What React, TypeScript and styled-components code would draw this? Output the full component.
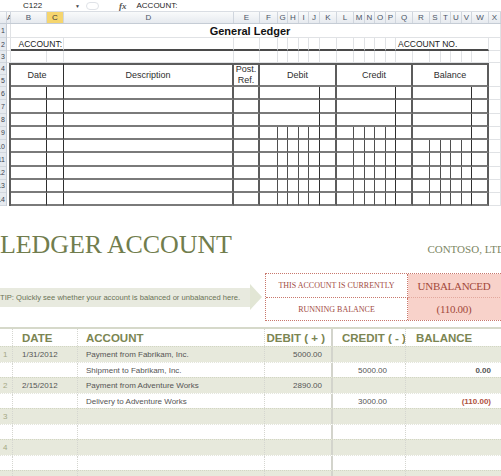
import React from 'react';
import styled, { createGlobalStyle, css } from 'styled-components';

const GlobalStyle = createGlobalStyle`
  html, body { margin: 0; padding: 0; background: #ffffff; }
  body { font-family: "Liberation Sans", Arial, sans-serif; }
  #root { width: 501px; height: 476px; overflow: hidden; }
`;

const LETTERS = 'ABCDEFGHIJKLMNOPQRSTUVWX'.split('');
const WIDTHS = [4, 36, 17, 170, 26, 18, 10, 11, 10, 11, 17, 17, 11, 10, 11, 10, 17, 17, 11, 10, 11, 10, 17, 12];
const COLS = WIDTHS.map((w) => `${w}px`).join(' ');
const ROW_H = [14, 13, 12, 12, 12, 13.25, 13.25, 13.25, 13.25, 13.25, 13.25, 13.25, 13.25, 13.25];

type Line = 'none' | 'faint' | 'thin' | 'fine' | 'thick' | 'row' | 'under';
const LINE: Record<Line, string> = {
  none: 'none',
  faint: '1px solid #e0e2e5',
  thin: '1px solid #2f2f2f',
  fine: '1px solid #4f4f4f',
  thick: '2px solid #5c5c5c',
  row: '2px solid #7a7a7a',
  under: '2px solid #4a4a4a',
};

/* ---------- Excel part ---------- */

const Excel = styled.section`
  display: flex;
  flex-direction: column;
  width: 501px;
`;

const FormulaBar = styled.div`
  display: flex;
  align-items: center;
  height: 12px;
  box-sizing: border-box;
  border-bottom: 1px solid #d9dde3;
  font-size: 8px;
  color: #1e1e1e;
`;

const NameBox = styled.div`
  width: 75px;
  box-sizing: border-box;
  padding-left: 23px;
`;

const DropArrow = styled.span`
  width: 7px;
  font-size: 5px;
  color: #444;
`;

const Grip = styled.span`
  margin-left: 4px;
  width: 13px;
  height: 8px;
  border: 1px solid #dfe2e7;
  border-radius: 5px;
  box-sizing: border-box;
`;

const Fx = styled.span`
  margin-left: 20px;
  font-family: "Liberation Serif", serif;
  font-style: italic;
  font-weight: bold;
  font-size: 9px;
  color: #555;
`;

const FormulaText = styled.span`
  margin-left: 10px;
`;

const ColumnStrip = styled.div`
  display: grid;
  grid-template-columns: 7px ${COLS};
  height: 12px;
  box-sizing: border-box;
  background: linear-gradient(#f9fafb, #e6eaef);
  border-bottom: 1px solid #c5ccd5;
`;

const ColHead = styled.div<{ $active?: boolean }>`
  border-right: 1px solid #d0d6de;
  font-size: 8px;
  line-height: 11px;
  text-align: center;
  color: #4a5465;
  overflow: hidden;
  ${(p) =>
    p.$active &&
    css`
      background: #f5d56e;
      color: #3a3a3a;
    `}
`;

const SheetBody = styled.div`
  display: flex;
`;

const RowHeads = styled.div`
  width: 7px;
  flex: none;
  display: flex;
  flex-direction: column;
  background: #e6eaef;
  border-right: 1px solid #c5ccd5;
  box-sizing: border-box;
`;

const RowHead = styled.div<{ $h: number }>`
  height: ${(p) => p.$h}px;
  display: flex;
  align-items: center;
  justify-content: flex-end;
  overflow: hidden;
  font-size: 7px;
  color: #3d4450;
  border-bottom: 1px solid #d2d8df;
  box-sizing: border-box;
  padding-right: 1px;
`;

const SheetGrid = styled.div`
  display: grid;
  grid-template-columns: ${COLS};
  grid-template-rows: ${ROW_H.map((h) => `${h}px`).join(' ')};
`;

type CellProps = {
  $c: number;
  $span?: number;
  $r: number;
  $rspan?: number;
  $right?: Line;
  $bottom?: Line;
  $top?: Line;
  $align?: string;
};

const Cell = styled.div<CellProps>`
  grid-column: ${(p) => p.$c} / span ${(p) => p.$span ?? 1};
  grid-row: ${(p) => p.$r} / span ${(p) => p.$rspan ?? 1};
  box-sizing: border-box;
  border-right: ${(p) => LINE[p.$right ?? 'none']};
  border-bottom: ${(p) => LINE[p.$bottom ?? 'none']};
  border-top: ${(p) => LINE[p.$top ?? 'none']};
  display: flex;
  align-items: center;
  justify-content: ${(p) => p.$align ?? 'flex-start'};
  overflow: hidden;
  white-space: nowrap;
  min-width: 0;
`;

const SheetTitle = styled.span`
  font-size: 11px;
  font-weight: bold;
  color: #111;
`;

const SheetLabel = styled.span<{ $pad?: string }>`
  font-size: 8.5px;
  color: #222;
  padding: ${(p) => p.$pad ?? '0'};
`;

const HeadLabel = styled.span`
  font-size: 9px;
  color: #2e2e2e;
  text-align: center;
  line-height: 11px;
`;

function rightLine(ci: number, i: number): Line {
  const l = LETTERS[ci - 1];
  if ('BCJPV'.includes(l)) return 'thin';
  if ('DEKQW'.includes(l)) return 'thick';
  if ('FGHILMNO'.includes(l)) return i >= 3 ? 'fine' : 'none';
  if ('RSTU'.includes(l)) return i >= 4 ? 'fine' : 'none';
  return 'none';
}

function sheetCells() {
  const out: React.ReactNode[] = [];
  let k = 0;
  const add = (p: CellProps, child?: React.ReactNode) => out.push(<Cell key={k++} {...p}>{child}</Cell>);

  // Row 1
  add({ $c: 1, $r: 1, $right: 'faint', $bottom: 'faint' });
  add({ $c: 2, $span: 22, $r: 1, $bottom: 'faint', $align: 'center' }, <SheetTitle>General Ledger</SheetTitle>);
  add({ $c: 24, $r: 1, $right: 'faint', $bottom: 'faint' });

  // Row 2
  add({ $c: 1, $r: 2, $right: 'faint', $bottom: 'faint' });
  add({ $c: 2, $span: 2, $r: 2, $right: 'faint', $bottom: 'under', $align: 'flex-end' }, <SheetLabel $pad="0 1px 0 0">ACCOUNT:</SheetLabel>);
  for (let c = 4; c <= 16; c++) add({ $c: c, $r: 2, $right: 'faint', $bottom: 'under' });
  add({ $c: 17, $span: 7, $r: 2, $right: 'faint', $bottom: 'under' }, <SheetLabel $pad="0 0 0 2px">ACCOUNT NO.</SheetLabel>);
  add({ $c: 24, $r: 2, $right: 'faint', $bottom: 'faint' });

  // Row 3
  for (let c = 1; c <= 24; c++) add({ $c: c, $r: 3, $right: 'faint', $bottom: 'faint' });

  // Rows 4-5 : table header
  add({ $c: 1, $r: 4, $rspan: 2, $right: 'thick' });
  add({ $c: 2, $span: 2, $r: 4, $rspan: 2, $top: 'thick', $right: 'thin', $bottom: 'row', $align: 'center' }, <HeadLabel>Date</HeadLabel>);
  add({ $c: 4, $r: 4, $rspan: 2, $top: 'thick', $right: 'thick', $bottom: 'row', $align: 'center' }, <HeadLabel>Description</HeadLabel>);
  add(
    { $c: 5, $r: 4, $rspan: 2, $top: 'thick', $right: 'thick', $bottom: 'row', $align: 'center' },
    <HeadLabel>
      Post.
      <br />
      Ref.
    </HeadLabel>,
  );
  add({ $c: 6, $span: 6, $r: 4, $rspan: 2, $top: 'thick', $right: 'thick', $bottom: 'row', $align: 'center' }, <HeadLabel>Debit</HeadLabel>);
  add({ $c: 12, $span: 6, $r: 4, $rspan: 2, $top: 'thick', $right: 'thick', $bottom: 'row', $align: 'center' }, <HeadLabel>Credit</HeadLabel>);
  add({ $c: 18, $span: 6, $r: 4, $rspan: 2, $top: 'thick', $right: 'thick', $bottom: 'row', $align: 'center' }, <HeadLabel>Balance</HeadLabel>);
  add({ $c: 24, $r: 4, $rspan: 2, $right: 'faint', $bottom: 'faint' });

  // Rows 6-14 : ledger lines
  for (let i = 0; i < 9; i++) {
    const r = 6 + i;
    add({ $c: 1, $r: r, $right: 'thick' });
    for (let c = 2; c <= 23; c++) add({ $c: c, $r: r, $right: rightLine(c, i), $bottom: 'row' });
    add({ $c: 24, $r: r, $right: 'faint', $bottom: 'faint' });
  }
  return out;
}

/* ---------- Ledger template part ---------- */

const Template = styled.section`
  padding-top: 26px;
  width: 501px;
`;

const TitleRow = styled.div`
  display: flex;
  align-items: baseline;
  height: 26px;
`;

const BigTitle = styled.h1`
  margin: 0;
  font-family: "Liberation Serif", serif;
  font-weight: normal;
  font-size: 26px;
  line-height: 26px;
  color: #717d4d;
  letter-spacing: -0.1px;
  white-space: nowrap;
`;

const Company = styled.div`
  margin-left: auto;
  margin-right: -4px;
  font-family: "Liberation Serif", serif;
  font-size: 11px;
  color: #7d8663;
  white-space: nowrap;
`;

const StatusRow = styled.div`
  margin-top: 15px;
  display: flex;
  align-items: center;
`;

const Tip = styled.div`
  position: relative;
  flex: none;
  width: 250px;
  height: 19px;
  background: #e8eadf;
  font-size: 7.6px;
  line-height: 19px;
  color: #6b7356;
  white-space: nowrap;

  &::after {
    content: '';
    position: absolute;
    right: -12px;
    top: -4px;
    border-left: 12px solid #e2e6d5;
    border-top: 13.5px solid transparent;
    border-bottom: 13.5px solid transparent;
  }
`;

const StatusBox = styled.div`
  margin-left: 15px;
  flex: none;
  width: 240px;
  border: 1px dotted #c8786d;
  display: grid;
  grid-template-columns: 142px 1fr;
  grid-template-rows: 24px 22px;
`;

const StatusLabel = styled.div<{ $first?: boolean }>`
  display: flex;
  align-items: center;
  justify-content: center;
  font-family: "Liberation Serif", serif;
  font-size: 8px;
  text-transform: uppercase;
  color: #a24b3f;
  border-right: 1px dotted #c8786d;
  border-bottom: ${(p) => (p.$first ? '1px dotted #c8786d' : 'none')};
`;

const StatusValue = styled.div<{ $first?: boolean }>`
  display: flex;
  align-items: center;
  justify-content: center;
  background: #f8d2ca;
  font-family: "Liberation Serif", serif;
  font-size: 11px;
  letter-spacing: -0.3px;
  color: #a3493b;
  padding-right: 6px;
  border-bottom: ${(p) => (p.$first ? '1px dotted #e3a89d' : 'none')};
`;

const LedgerTable = styled.div`
  margin-top: 6px;
  display: flex;
  flex-direction: column;
`;

const TABLE_COLS = '13px 65px 187px 68px 73px 95px';

const HeaderRow = styled.div`
  display: grid;
  grid-template-columns: ${TABLE_COLS};
  height: 19px;
  box-sizing: border-box;
  border-top: 2px solid #d6d9ca;
`;

const DataRow = styled.div<{ $shade: boolean }>`
  display: grid;
  grid-template-columns: ${TABLE_COLS};
  height: 15.5px;
  box-sizing: border-box;
  background: ${(p) => (p.$shade ? '#e7e9dc' : '#ffffff')};
  border-top: 1px dotted ${(p) => (p.$shade ? '#d2d6c3' : '#e4e6dc')};
`;

type Divider = 'dot' | 'solid' | 'none';
const DIV: Record<Divider, string> = {
  dot: '1px dotted #d5d6d0',
  solid: '2px solid #d3d4cc',
  none: 'none',
};

const HeadCell = styled.div<{ $div: Divider; $align?: string; $pad: string }>`
  display: flex;
  align-items: center;
  justify-content: ${(p) => p.$align ?? 'flex-start'};
  padding: ${(p) => p.$pad};
  border-right: ${(p) => DIV[p.$div]};
  font-size: 11.5px;
  font-weight: bold;
  color: #7b8552;
  white-space: nowrap;
  overflow: hidden;
`;

const DataCell = styled.div<{ $div: Divider; $align?: string; $pad: string; $tone?: 'num' | 'bold' | 'neg' }>`
  display: flex;
  align-items: center;
  justify-content: ${(p) => p.$align ?? 'flex-start'};
  padding: ${(p) => p.$pad};
  border-right: ${(p) => DIV[p.$div]};
  font-size: 8px;
  color: #555;
  white-space: nowrap;
  overflow: hidden;
  ${(p) => p.$tone === 'num' && css`color: #a4a884;`}
  ${(p) => p.$tone === 'bold' && css`font-weight: bold; color: #555;`}
  ${(p) => p.$tone === 'neg' && css`font-weight: bold; color: #b0523e;`}
`;

type Entry = {
  n?: string;
  date?: string;
  account?: string;
  debit?: string;
  credit?: string;
  balance?: string;
  negative?: boolean;
};

const ENTRIES: Entry[] = [
  { n: '1', date: '1/31/2012', account: 'Payment from Fabrikam, Inc.', debit: '5000.00' },
  { account: 'Shipment to Fabrikam, Inc.', credit: '5000.00', balance: '0.00' },
  { n: '2', date: '2/15/2012', account: 'Payment from Adventure Works', debit: '2890.00' },
  { account: 'Delivery to Adventure Works', credit: '3000.00', balance: '(110.00)', negative: true },
  { n: '3' },
  {},
  { n: '4' },
  {},
  { n: '5' },
];

export default function App() {
  return (
    <>
      <GlobalStyle />
      <Excel>
        <FormulaBar>
          <NameBox>C122</NameBox>
          <DropArrow>▼</DropArrow>
          <Grip />
          <Fx>fx</Fx>
          <FormulaText>ACCOUNT:</FormulaText>
        </FormulaBar>
        <ColumnStrip>
          <ColHead />
          {LETTERS.map((l) => (
            <ColHead key={l} $active={l === 'C'}>
              {l}
            </ColHead>
          ))}
        </ColumnStrip>
        <SheetBody>
          <RowHeads>
            {ROW_H.map((h, i) => (
              <RowHead key={i} $h={h}>
                {i + 1}
              </RowHead>
            ))}
          </RowHeads>
          <SheetGrid>{sheetCells()}</SheetGrid>
        </SheetBody>
      </Excel>

      <Template>
        <TitleRow>
          <BigTitle>LEDGER ACCOUNT</BigTitle>
          <Company>CONTOSO, LTD</Company>
        </TitleRow>
        <StatusRow>
          <Tip>TIP: Quickly see whether your account is balanced or unbalanced here.</Tip>
          <StatusBox>
            <StatusLabel $first>This account is currently</StatusLabel>
            <StatusValue $first>UNBALANCED</StatusValue>
            <StatusLabel>Running balance</StatusLabel>
            <StatusValue>(110.00)</StatusValue>
          </StatusBox>
        </StatusRow>
        <LedgerTable>
          <HeaderRow>
            <HeadCell $div="dot" $pad="0" />
            <HeadCell $div="dot" $pad="0 0 0 9px">DATE</HeadCell>
            <HeadCell $div="dot" $pad="0 0 0 8px">ACCOUNT</HeadCell>
            <HeadCell $div="solid" $pad="0 6px 0 0" $align="flex-end">
              DEBIT ( + )
            </HeadCell>
            <HeadCell $div="dot" $pad="0 0 0 9px">CREDIT ( - )</HeadCell>
            <HeadCell $div="none" $pad="0 0 0 10px">BALANCE</HeadCell>
          </HeaderRow>
          {ENTRIES.map((e, i) => (
            <DataRow key={i} $shade={i % 2 === 0}>
              <DataCell $div="dot" $pad="0 0 0 3px" $tone="num">
                {e.n}
              </DataCell>
              <DataCell $div="dot" $pad="0 0 0 9px">
                {e.date}
              </DataCell>
              <DataCell $div="dot" $pad="0 0 0 8px">
                {e.account}
              </DataCell>
              <DataCell $div="solid" $pad="0 9px 0 0" $align="flex-end">
                {e.debit}
              </DataCell>
              <DataCell $div="dot" $pad="0 18px 0 0" $align="flex-end">
                {e.credit}
              </DataCell>
              <DataCell $div="none" $pad="0 10px 0 0" $align="flex-end" $tone={e.negative ? 'neg' : 'bold'}>
                {e.balance}
              </DataCell>
            </DataRow>
          ))}
        </LedgerTable>
      </Template>
    </>
  );
}
